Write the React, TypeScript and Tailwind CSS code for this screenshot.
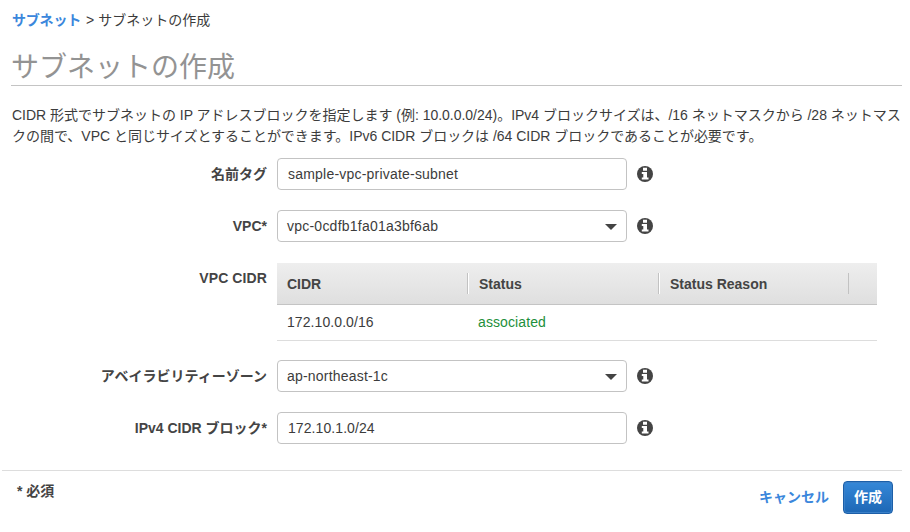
import type { ReactNode } from "react";

function InfoIcon() {
  return (
    <svg className="ml-[10px] size-4 shrink-0" viewBox="0 0 16 16" aria-label="info">
      <circle cx="8" cy="8" r="8" fill="#444" />
      <path d="M6 1.8h4v3H6zM4.8 6H10v5.4h1.5v2.2H4.8v-2.2h1.5V8.1H4.8z" fill="#fff" />
    </svg>
  );
}

function Row({ label, className, children }: { label: string; className: string; children: ReactNode }) {
  return (
    <div className={`flex items-center ${className}`}>
      <div className="w-[267px] shrink-0 whitespace-nowrap text-right font-bold leading-5 text-[#444]">{label}</div>
      <div className="ml-[10px] flex items-center">{children}</div>
    </div>
  );
}

function Field({ value, select = false, tracking }: { value: string; select?: boolean; tracking: string }) {
  return (
    <>
      <div
        className={`flex h-8 w-[350px] items-center justify-between rounded-[4px] border border-[#c3c3c3] bg-white pr-[9px] ${
          select ? "pl-[9px]" : "pl-[10px]"
        }`}
      >
        <span className={`leading-5 ${tracking}`}>{value}</span>
        {select && (
          <svg className="mt-px h-[6px] w-[12px]" viewBox="0 0 12 6">
            <path d="M0 0h12L6 6z" fill="#444" />
          </svg>
        )}
      </div>
      <InfoIcon />
    </>
  );
}

function HeaderCell({ children, className }: { children?: ReactNode; className: string }) {
  return (
    <div className={`flex h-[21px] items-center border-r pt-[2px] ${className}`}>{children}</div>
  );
}

export default function App() {
  return (
    <div className="h-[532px] w-[910px] overflow-hidden bg-white font-['Liberation_Sans','Noto_Sans_CJK_JP',sans-serif] text-[14px] text-[#3c3c3c]">
      <nav className="flex h-[41px] items-center pb-px pl-3 leading-5">
        <span className="font-bold tracking-[-0.2px] text-[#3b87dc]">サブネット</span>
        <span className="ml-[5px] mr-[4px]">&gt;</span>
        <span>サブネットの作成</span>
      </nav>
      <h1 className="ml-[11px] mr-2 flex h-[45px] items-center border-b border-[#c4c4c4] pt-[10px] text-[28px] font-normal leading-9 text-[#939393]">
        サブネットの作成
      </h1>
      <p className="ml-3 mt-[19px] whitespace-nowrap leading-[21px]">
        <span className="block tracking-[-0.015px]">
          CIDR 形式でサブネットの IP アドレスブロックを指定します (例: 10.0.0.0/24)。IPv4 ブロックサイズは、/16 ネットマスクから /28 ネットマス
        </span>
        <span className="block tracking-[-0.02px]">
          クの間で、VPC と同じサイズとすることができます。IPv6 CIDR ブロックは /64 CIDR ブロックであることが必要です。
        </span>
      </p>
      <Row label="名前タグ" className="mt-[11px]">
        <Field value="sample-vpc-private-subnet" tracking="tracking-[0.21px]" />
      </Row>
      <Row label="VPC*" className="mt-5">
        <Field value="vpc-0cdfb1fa01a3bf6ab" select tracking="tracking-[0.23px]" />
      </Row>
      <div className="mt-[21px] flex">
        <div className="w-[267px] shrink-0 pt-[5px] text-right font-bold leading-5 tracking-[0.1px] text-[#444]">VPC CIDR</div>
        <div className="ml-[10px] w-[600px]">
          <div className="flex h-[42px] items-center border-b border-[#c4c4c4] bg-linear-to-b from-[#eee] to-[#dfdfdf] font-bold text-[#444]">
            <HeaderCell className="w-[191px] border-[#c2c2c2] pl-[10px] shadow-[1px_0_0_#fff]">CIDR</HeaderCell>
            <HeaderCell className="w-[191px] border-[#c2c2c2] pl-[11px] shadow-[1px_0_0_#fff]">Status</HeaderCell>
            <HeaderCell className="w-[190px] border-[#c2c2c2] pl-[11px]">Status Reason</HeaderCell>
          </div>
          <div className="flex h-9 items-center border-b border-[#ddd]">
            <span className="w-[201px] pl-[10px] tracking-[0.08px]">172.10.0.0/16</span>
            <span className="tracking-[0.1px] text-[#1d8f3b]">associated</span>
          </div>
        </div>
      </div>
      <Row label="アベイラビリティーゾーン" className="mt-[19px]">
        <Field value="ap-northeast-1c" select tracking="tracking-[0.2px]" />
      </Row>
      <Row label="IPv4 CIDR ブロック*" className="mt-5">
        <Field value="172.10.1.0/24" tracking="tracking-[0.08px]" />
      </Row>
      <footer className="ml-[2px] mr-2 mt-[26px] flex justify-between border-t border-[#ddd] pt-[10px]">
        <div className="pl-[15px] font-bold leading-5 text-[#444]">* 必須</div>
        <div className="flex items-center pr-[9px] font-bold">
          <span className="mr-[14px] text-[#3b87dc]">キャンセル</span>
          <button className="h-[33px] w-[50px] rounded-[4px] border border-[#1c5fa8] bg-linear-to-b from-[#3588d8] to-[#1d67b5] text-white shadow-[inset_0_0_0_1px_#3a80c8]">
            作成
          </button>
        </div>
      </footer>
    </div>
  );
}
